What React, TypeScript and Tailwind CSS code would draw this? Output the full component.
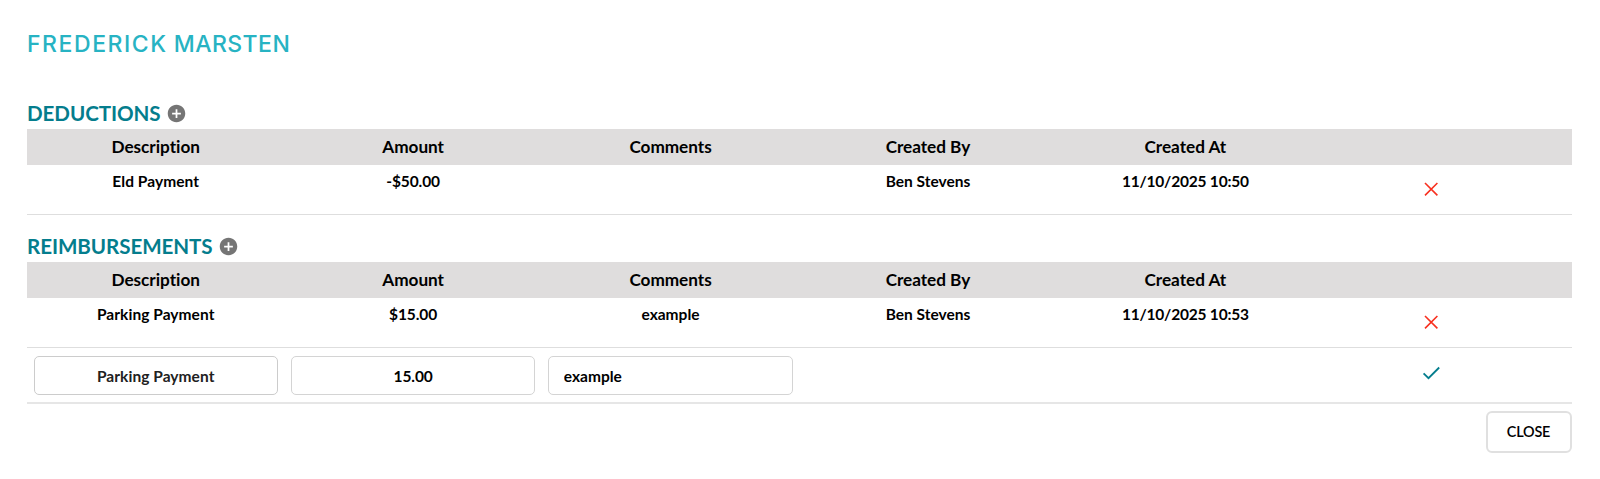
import React from 'react';
import { MdAddCircle } from 'react-icons/md';

const COLUMNS = ['Description', 'Amount', 'Comments', 'Created By', 'Created At', ''];

interface Entry {
  id: number;
  description: string;
  amount: string;
  comments: string;
  createdBy: string;
  createdAt: string;
}

const DEDUCTIONS: Entry[] = [
  { id: 1, description: 'Eld Payment', amount: '-$50.00', comments: '', createdBy: 'Ben Stevens', createdAt: '11/10/2025 10:50' },
];

const REIMBURSEMENTS: Entry[] = [
  { id: 2, description: 'Parking Payment', amount: '$15.00', comments: 'example', createdBy: 'Ben Stevens', createdAt: '11/10/2025 10:53' },
];

const CloseIcon: React.FC = () => (
  <svg className="size-[22px] text-[#f8301f]" viewBox="0 0 22 22" fill="none" stroke="currentColor" strokeWidth="1.6">
    <path d="M5 5l12.4 12.4M17.4 5L5 17.4" />
  </svg>
);

const CheckIcon: React.FC = () => (
  <svg className="size-[22px] text-[#047d8d]" viewBox="0 0 22 22" fill="none" stroke="currentColor" strokeWidth="1.8">
    <path d="M3.6 11.3l4.9 4.9L19.2 5.5" />
  </svg>
);

const SectionTitle: React.FC<{ title: string }> = ({ title }) => (
  <div className="flex h-[31px] items-center gap-[5px]">
    <h2 className="text-[20.6px] leading-[31px] font-bold tracking-[-0.08px] text-[#047d8d]">{title}</h2>
    <button aria-label={`Add to ${title}`}>
      <MdAddCircle className="size-[21px] text-[#757575]" />
    </button>
  </div>
);

const EntryTable: React.FC<{ entries: Entry[] }> = ({ entries }) => (
  <div className="text-center font-bold">
    <div className="grid h-9 grid-cols-6 bg-[#dfdddd] text-[17.2px] leading-9 tracking-[-0.03px]">
      {COLUMNS.map((col) => (
        <div key={col}>{col}</div>
      ))}
    </div>
    {entries.map((entry) => (
      <div key={entry.id} className="grid h-[50px] grid-cols-6 border-b border-[#dedede] pt-[6px] text-[15.5px] leading-5">
        <div className="tracking-[0.05px]">{entry.description}</div>
        <div className="tracking-[-0.1px]">{entry.amount}</div>
        <div>{entry.comments}</div>
        <div>{entry.createdBy}</div>
        <div className="tracking-[-0.2px]">{entry.createdAt}</div>
        <button className="flex justify-center pt-[7px] pr-6" aria-label="Delete">
          <CloseIcon />
        </button>
      </div>
    ))}
  </div>
);

const App: React.FC = () => {
  return (
    <div className="h-[479px] bg-white pt-7 pr-[28.5px] pl-[27px] font-[Lato,sans-serif] text-black [font-variant-ligatures:none]">
      <h1 className="h-[70px] font-[Inter,sans-serif] text-[23px] leading-8 font-medium text-[#27b3c3]">
        <span className="tracking-[1.55px]">FREDERICK</span> <span className="tracking-[0.45px]">MARSTEN</span>
      </h1>

      {/* Deductions */}
      <SectionTitle title="DEDUCTIONS" />
      <EntryTable entries={DEDUCTIONS} />

      {/* Reimbursements */}
      <div className="pt-4">
        <SectionTitle title="REIMBURSEMENTS" />
      </div>
      <EntryTable entries={REIMBURSEMENTS} />

      {/* New entry */}
      <div className="grid h-[56px] grid-cols-6 border-b-2 border-[#e6e6e6] pt-2 text-[15.5px] font-bold">
        <div className="mx-[6.5px] h-[39px] rounded-[5px] border border-[#cccccc] text-center leading-[39px] tracking-[0.05px] text-[#212121]">
          Parking Payment
        </div>
        <input
          className="mx-[6.5px] h-[39px] rounded-[5px] border border-[#d4d4d4] text-center tracking-[-0.1px]"
          defaultValue="15.00"
        />
        <input
          className="mx-[6.5px] h-[39px] rounded-[5px] border border-[#d4d4d4] px-[14.5px]"
          defaultValue="example"
        />
        <button className="col-start-6 flex items-start justify-center pt-[6px] pr-6" aria-label="Save">
          <CheckIcon />
        </button>
      </div>

      <div className="flex justify-end pt-[7px]">
        <button className="h-[42px] w-[86px] rounded-[6px] border-2 border-[#e0e0e0] text-[14.4px] font-semibold tracking-[-0.15px]">
          CLOSE
        </button>
      </div>
    </div>
  );
};

export default App;
